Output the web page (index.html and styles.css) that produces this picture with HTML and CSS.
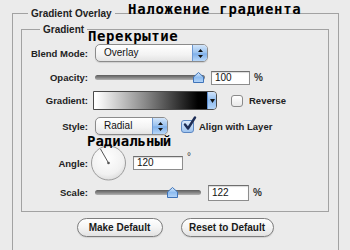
FILE: index.html
```html
<!DOCTYPE html>
<html>
<head>
<meta charset="utf-8">
<link rel="stylesheet" href="styles.css">
<title>Gradient Overlay</title>
</head>
<body>
<fieldset class="panel">
  <legend class="panel-title">Gradient Overlay</legend>
  <fieldset class="group">
    <legend class="group-title">Gradient</legend>

    <div class="row row-blend">
      <span class="label">Blend Mode:</span>
      <div class="select select-blend">
        <span class="select-text">Overlay</span>
        <span class="select-arrows">
          <svg width="7" height="11" viewBox="0 0 7 11"><path d="M3.5 1 L6 4 L1 4 Z M1 7 L6 7 L3.5 10 Z" fill="#111"/></svg>
        </span>
      </div>
    </div>

    <div class="row row-opacity">
      <span class="label">Opacity:</span>
      <div class="slider slider-opacity">
        <span class="track"></span>
        <svg class="thumb" style="left:94%" width="11" height="11" viewBox="0 0 11 11"><path d="M0.5 5 L5.5 0.5 L10.5 5 L10.5 10.5 L0.5 10.5 Z" fill="url(#tb)" stroke="#3f73b8"/><defs><linearGradient id="tb" x1="0" y1="0" x2="0" y2="1"><stop offset="0" stop-color="#dcecfc"/><stop offset="0.5" stop-color="#8dbcf0"/><stop offset="1" stop-color="#b5d5f8"/></linearGradient></defs></svg>
      </div>
      <span class="field field-opacity">100</span>
      <span class="unit">%</span>
    </div>

    <div class="row row-gradient">
      <span class="label">Gradient:</span>
      <div class="swatch">
        <span class="swatch-fill"></span>
        <span class="swatch-drop">
          <svg width="5" height="4" viewBox="0 0 5 4"><path d="M0 0 L5 0 L2.5 4 Z" fill="#111"/></svg>
        </span>
      </div>
      <span class="check"></span>
      <span class="check-label">Reverse</span>
    </div>

    <div class="row row-style">
      <span class="label">Style:</span>
      <div class="select select-style">
        <span class="select-text">Radial</span>
        <span class="select-arrows">
          <svg width="7" height="11" viewBox="0 0 7 11"><path d="M3.5 1 L6 4 L1 4 Z M1 7 L6 7 L3.5 10 Z" fill="#111"/></svg>
        </span>
      </div>
      <span class="check check-on">
        <svg class="tick" width="15" height="16" viewBox="0 0 15 16"><path d="M3 8.5 L6 12.5 L13 1.5" fill="none" stroke="#1d2d55" stroke-width="2.4" stroke-linecap="round" stroke-linejoin="round"/></svg>
      </span>
      <span class="check-label">Align with Layer</span>
    </div>

    <div class="row row-angle">
      <span class="label">Angle:</span>
      <svg class="dial" width="37" height="36" viewBox="0 0 37 36">
        <defs><radialGradient id="dg" cx="0.45" cy="0.35" r="0.7"><stop offset="0" stop-color="#ffffff"/><stop offset="0.7" stop-color="#f1f1f1"/><stop offset="1" stop-color="#d8d8d8"/></radialGradient></defs>
        <circle cx="18.5" cy="18" r="17" fill="url(#dg)" stroke="#9c9c9c"/>
        <line x1="18.5" y1="18" x2="10.5" y2="4" stroke="#555" stroke-width="1"/>
        <circle cx="18.5" cy="18" r="1.3" fill="#555"/>
      </svg>
      <span class="field field-angle">120</span>
      <span class="degree">°</span>
    </div>

    <div class="row row-scale">
      <span class="label">Scale:</span>
      <div class="slider slider-scale">
        <span class="track"></span>
        <svg class="thumb" style="left:73%" width="11" height="11" viewBox="0 0 11 11"><path d="M0.5 5 L5.5 0.5 L10.5 5 L10.5 10.5 L0.5 10.5 Z" fill="url(#tb)" stroke="#3f73b8"/></svg>
      </div>
      <span class="field field-scale">122</span>
      <span class="unit">%</span>
    </div>
  </fieldset>

  <div class="buttons">
    <button type="button" class="btn btn-make">Make Default</button>
    <button type="button" class="btn btn-reset">Reset to Default</button>
  </div>
</fieldset>

<span class="note note-title">Наложение градиента</span>
<span class="note note-blend">Перекрытие</span>
<span class="note note-style">Радиальный</span>
</body>
</html>
```

FILE: styles.css
```css
html, body {
	margin: 0;
	height: 100%;
	overflow: hidden;
}

body {
	background-color: #ebebeb;
	font-family: "Liberation Sans", Arial, sans-serif;
	font-size: 10px;
	color: #1e1e1e;
}

/* outer and inner groups */
fieldset.panel {
	box-sizing: border-box;
	width: 327px;
	height: 243px;
	margin: 7px 0 0 12px;
	padding: 3px 9px 0 8px;
	border: 1px solid #a2a2a2;
	border-bottom: 0;
}

legend.panel-title,
legend.group-title {
	padding: 0 3px;
	font-weight: bold;
	line-height: 13px;
	color: #222;
}
legend.panel-title {
	margin-left: 7px;
}
legend.group-title {
	margin-left: 17px;
}

fieldset.group {
	margin: 0;
	padding: 8px 0 10px 1px;
	border: 1px solid #a2a2a2;
}

/* rows */
div.row {
	display: flex;
	align-items: center;
}
div.row-blend { height: 18px; }
div.row-opacity { height: 15px; margin-top: 8px; }
div.row-gradient { height: 19px; margin-top: 6px; }
div.row-style { height: 18px; margin-top: 7px; }
div.row-angle { height: 36px; margin-top: 10px; }
div.row-scale { height: 17px; margin-top: 3px; }

span.label {
	flex: none;
	width: 65px;
	margin-right: 7px;
	text-align: right;
	font-size: 9.5px;
	font-weight: bold;
	color: #222;
}

/* popup menus */
div.select {
	box-sizing: border-box;
	display: flex;
	height: 18px;
	border: 1px solid #8b8b8b;
	border-radius: 5px;
	background: linear-gradient(#ffffff, #f3f3f3 60%, #e4e4e4);
	box-shadow: 0 1px 1px rgba(0,0,0,0.12);
	overflow: hidden;
}
div.select-blend { width: 113px; }
div.select-style { width: 73px; }

span.select-text {
	flex: 1;
	padding-left: 8px;
	line-height: 16px;
	color: #111;
}
span.select-arrows {
	display: flex;
	align-items: center;
	justify-content: center;
	width: 14px;
	border-left: 1px solid #6d98d2;
	background: linear-gradient(#d2e5fa, #98c1ef 50%, #7fb0ea 55%, #b8d7f8);
}

/* sliders */
div.slider {
	position: relative;
	height: 15px;
}
div.slider-opacity { width: 110px; }
div.slider-scale { width: 106px; }

span.track {
	position: absolute;
	left: 0;
	right: 0;
	top: 5px;
	height: 5px;
	border-radius: 3px;
	background: linear-gradient(#5c5c5c, #8c8c8c 60%, #b4b4b4);
}
svg.thumb {
	position: absolute;
	top: 2px;
	margin-left: -5px;
}

/* number fields */
span.field {
	box-sizing: border-box;
	height: 14px;
	margin-left: 6px;
	padding-left: 3px;
	border: 1px solid #8d8d8d;
	border-top-color: #6e6e6e;
	background-color: #ffffff;
	box-shadow: inset 0 1px 1px rgba(0,0,0,0.15);
	line-height: 12px;
	color: #111;
}
span.field-opacity { width: 39px; }
span.field-angle { width: 50px; }
span.field-scale { width: 41px; height: 16px; line-height: 14px; margin-left: 7px; }

span.unit {
	margin-left: 4px;
	font-weight: bold;
	color: #333;
}
span.degree {
	align-self: flex-start;
	margin: 6px 0 0 4px;
	color: #333;
}

/* gradient swatch */
div.swatch {
	box-sizing: border-box;
	display: flex;
	width: 124px;
	height: 19px;
	margin-left: -2px;
	border: 1px solid #4a4a4a;
	border-radius: 0 4px 4px 0;
	overflow: hidden;
}
span.swatch-fill {
	flex: 1;
	background: linear-gradient(to right, #ffffff 2%, #8a8a8a 45%, #000000 92%);
}
span.swatch-drop {
	display: flex;
	align-items: center;
	justify-content: center;
	width: 8px;
	border-left: 1px solid #5f8fd0;
	background: linear-gradient(#cfe3fa, #8fbcef 50%, #b3d4f8);
}

/* checkboxes */
span.check {
	position: relative;
	box-sizing: border-box;
	width: 12px;
	height: 12px;
	margin-left: 14px;
	border: 1px solid #8a8a8a;
	border-radius: 3px;
	background: linear-gradient(#ffffff, #e9e9e9);
}
span.check-on {
	width: 13px;
	height: 13px;
	margin-left: 13px;
	border-color: #5b86c2;
	background: linear-gradient(#dceafa, #9ec3ee);
}
svg.tick {
	position: absolute;
	left: 0;
	top: -5px;
}
span.check-label {
	margin-left: 6px;
	font-size: 9.5px;
	font-weight: bold;
	color: #222;
}
span.check-on + span.check-label {
	margin-left: 5px;
}

svg.dial {
	margin-left: -5px;
}

/* buttons */
div.buttons {
	display: flex;
	justify-content: center;
	gap: 18px;
	margin-top: 6px;
}
button.btn {
	box-sizing: border-box;
	height: 19px;
	padding: 0;
	border: 1px solid #7d7d7d;
	border-radius: 10px;
	background: linear-gradient(#ffffff, #f4f4f4 50%, #e2e2e2);
	box-shadow: 0 1px 1px rgba(0,0,0,0.1);
	font-family: "Liberation Sans", Arial, sans-serif;
	font-size: 10px;
	font-weight: bold;
	color: #1a1a1a;
}
button.btn-make { width: 86px; }
button.btn-reset { width: 93px; }

/* russian captions laid over the dialog */
span.note {
	position: absolute;
	font-family: "DejaVu Sans Mono", monospace;
	font-weight: bold;
	font-size: 14px;
	line-height: 14px;
	letter-spacing: 0.7px;
	color: #000000;
}
span.note-title { left: 128px; top: 2px; }
span.note-blend { left: 88px; top: 29px; letter-spacing: 0.6px; }
span.note-style { left: 87px; top: 134px; letter-spacing: 0; }
```
